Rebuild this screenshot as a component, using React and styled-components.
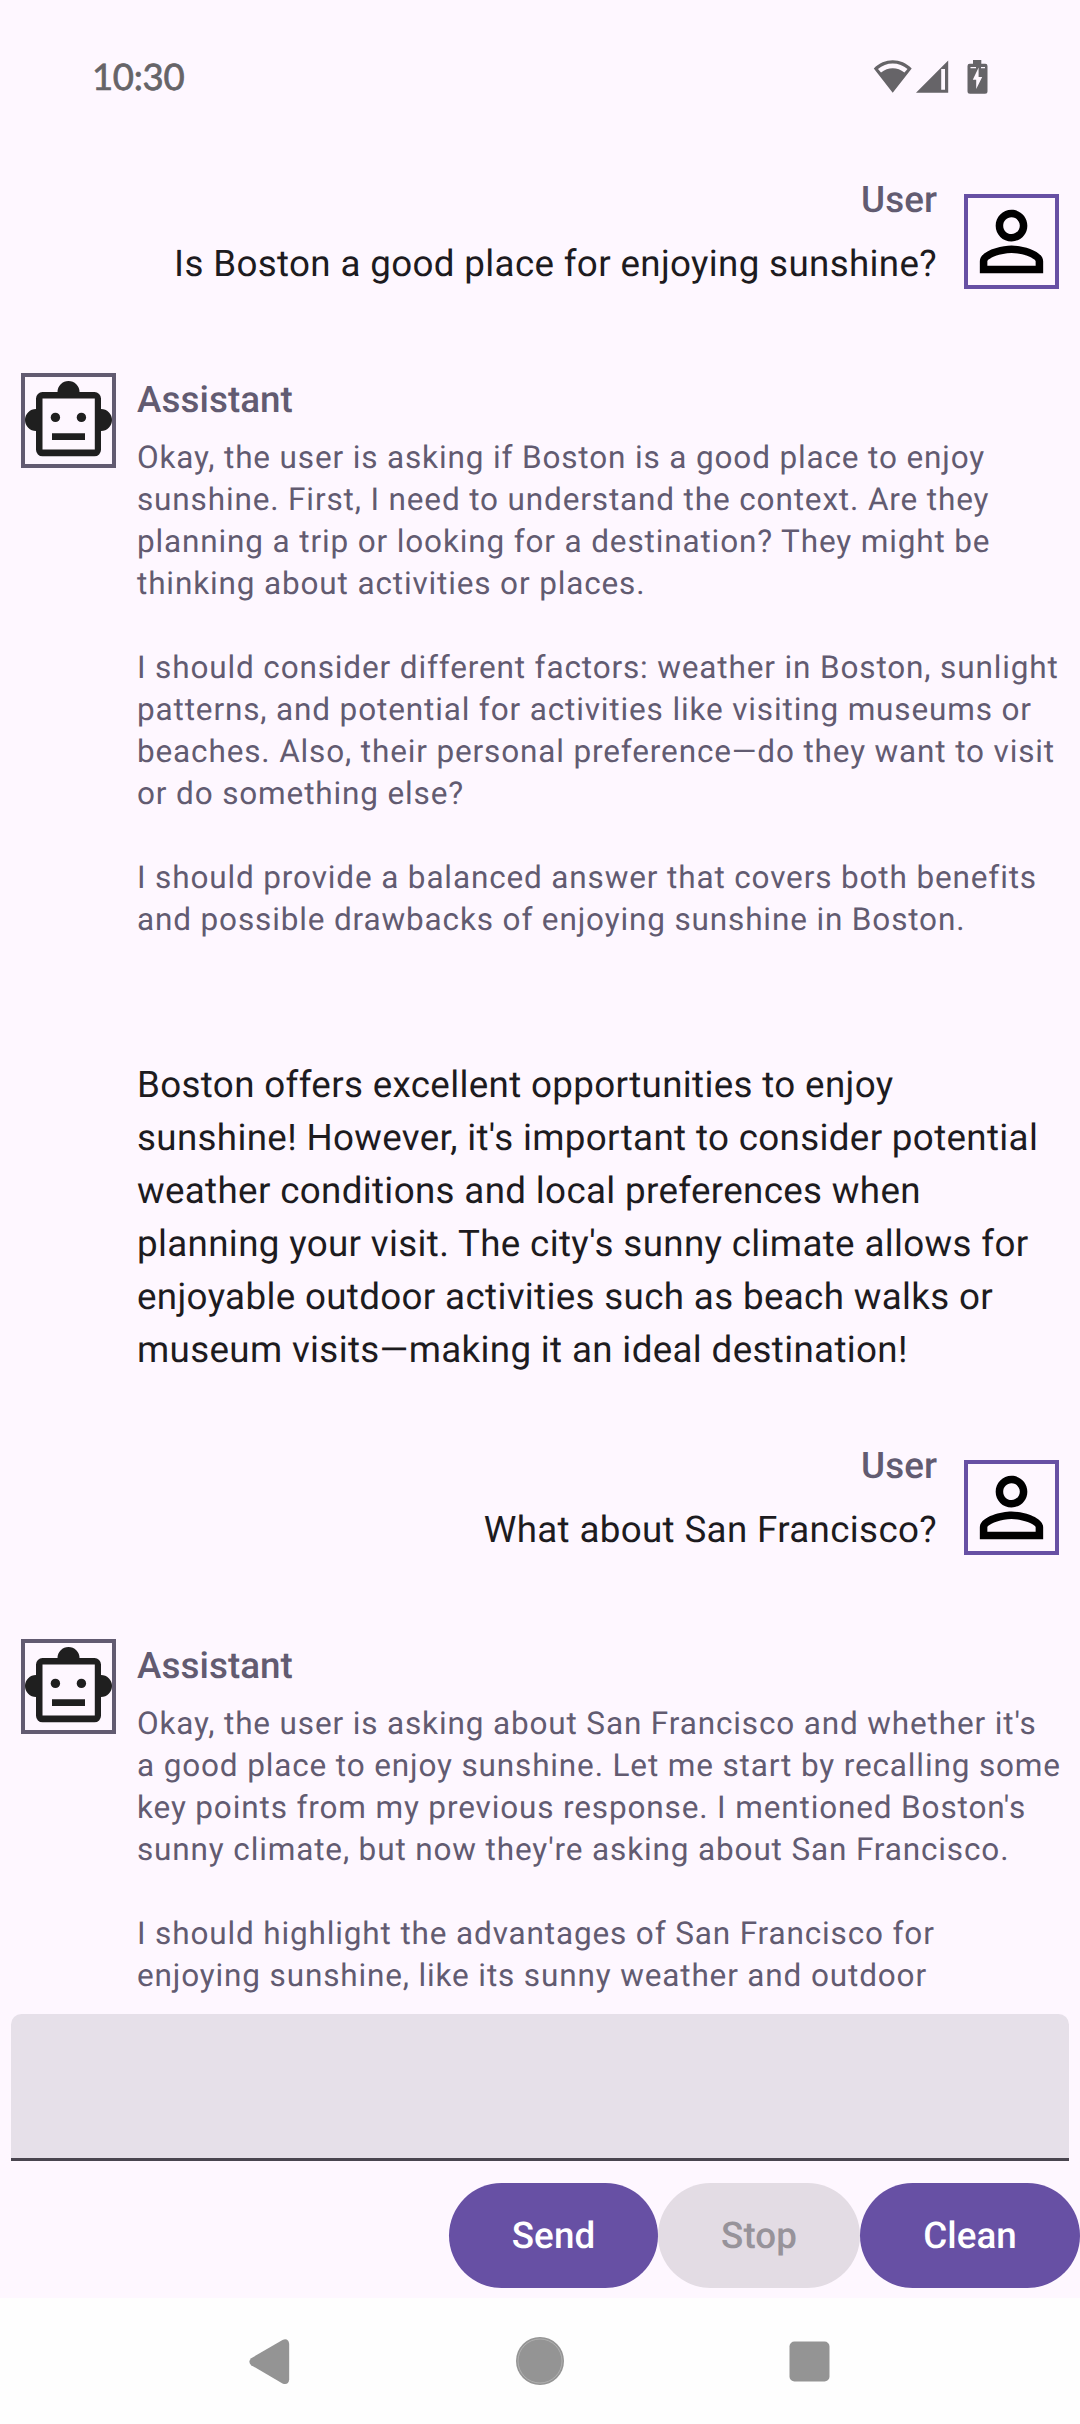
import React from "react";
import styled, { createGlobalStyle } from "styled-components";

const Global = createGlobalStyle`
  * { box-sizing: border-box; }
  html, body { margin: 0; padding: 0; background: #fef7ff; }
  body {
    font-family: Roboto, "Noto Sans", sans-serif;
    text-rendering: geometricPrecision;
  }
`;

const Screen = styled.div`
  display: flex;
  flex-direction: column;
  width: 1080px;
  height: 2424px;
  background: #fef7ff;
  overflow: hidden;
`;

const StatusBar = styled.header`
  display: flex;
  flex: none;
  justify-content: space-between;
  height: 152px;
  padding: 55px 91px 0 92px;
  color: #666468;
`;

const Clock = styled.time`
  font: 400 36.5px/42px Lato, sans-serif;
  letter-spacing: -0.3px;
  -webkit-text-stroke: 0.7px #666468;
`;

const StatusIcons = styled.svg`
  display: block;
  width: 116px;
  height: 44px;
`;

const Messages = styled.main`
  display: flex;
  flex-direction: column;
  flex: none;
  height: 1862px;
  padding: 21px 21px 0;
  overflow: hidden;
`;

const Message = styled.article`
  display: flex;
  flex: none;
  flex-direction: ${(p) => (p.$own ? "row-reverse" : "row")};
  align-items: ${(p) => (p.$own ? "flex-end" : "flex-start")};
  gap: ${(p) => (p.$own ? "27px" : "21px")};
  margin-bottom: ${(p) => (p.$own ? "83px" : "63px")};
`;

const Avatar = styled.div`
  flex: none;
  width: 95px;
  height: 95px;
  margin-bottom: 1px;
  border: 4px solid ${(p) => (p.$own ? "#6750a4" : "#625b71")};
  svg { display: block; margin: -4px; }
`;

const Content = styled.div`
  display: flex;
  flex-direction: column;
  gap: 11px;
  align-items: ${(p) => (p.$own ? "flex-end" : "flex-start")};
`;

const Name = styled.div`
  font-size: 36.75px;
  line-height: 53px;
  font-weight: 500;
  letter-spacing: 0.08px;
  color: #625b71;
`;

const Thought = styled.p`
  margin: 0;
  font-size: 31.5px;
  line-height: 42px;
  letter-spacing: 0.86px;
  color: #625b71;
  white-space: pre;
`;

const Answer = styled.p`
  margin: ${(p) => (p.$spaced ? "106px 0 0" : "0")};
  font-size: 36.75px;
  line-height: 53px;
  letter-spacing: 0.34px;
  color: #1d1b20;
  white-space: pre;
`;

const Composer = styled.div`
  flex: none;
  height: 147px;
  margin: 0 11px;
  border-radius: 10.5px 10.5px 0 0;
  border-bottom: 3px solid #49454f;
  background: #e6e0e9;
`;

const Actions = styled.div`
  display: flex;
  flex: none;
  justify-content: flex-end;
  height: 137px;
  padding-top: 22px;
`;

const Button = styled.button`
  height: 105px;
  width: ${(p) => p.$width}px;
  padding: 0;
  border: 0;
  border-radius: 53px;
  font: 500 36.75px/53px Roboto, sans-serif;
  letter-spacing: 0.08px;
  text-rendering: geometricPrecision;
  color: #ffffff;
  background: #6750a4;
  &:disabled {
    color: #97939a;
    background: #e3dce4;
  }
`;

const NavBar = styled.nav`
  display: flex;
  flex: 1;
  justify-content: center;
  gap: 222px;
  padding-top: 39px;
  background: #fefefe;
  svg { display: block; width: 48px; height: 48px; }
`;

const PersonIcon = () => (
  <svg width="95" height="95" viewBox="0 0 24 24" fill="#000">
    <path d="M12 5.9c1.16 0 2.1.94 2.1 2.1s-.94 2.1-2.1 2.1S9.9 9.16 9.9 8s.94-2.1 2.1-2.1m0 9c2.97 0 6.1 1.46 6.1 2.1v1.1H5.9V17c0-.64 3.13-2.1 6.1-2.1M12 4C9.79 4 8 5.79 8 8s1.79 4 4 4 4-1.79 4-4-1.79-4-4-4zm0 9c-2.67 0-8 1.34-8 4v3h16v-3c0-2.66-5.33-4-8-4z" />
  </svg>
);

const RobotIcon = () => (
  <svg width="95" height="95" viewBox="0 0 95 95" fill="#1f1f1f">
    <path
      fillRule="evenodd"
      d="M21.5 19H36.5a11 11 0 0 1 22 0H73.5a6.5 6.5 0 0 1 6.5 6.5V36a11 11 0 0 1 0 22V76.8a6.5 6.5 0 0 1-6.5 6.5h-52a6.5 6.5 0 0 1-6.5-6.5V58a11 11 0 0 1 0-22V25.5a6.5 6.5 0 0 1 6.5-6.5zM21.5 25.4V76.5H73.8V25.4z"
    />
    <circle cx="34.4" cy="44.4" r="4.7" />
    <circle cx="60.4" cy="44.4" r="4.7" />
    <path d="M31 60.2h33v6.8H31z" />
  </svg>
);

const thoughtOne = `Okay, the user is asking if Boston is a good place to enjoy
sunshine. First, I need to understand the context. Are they
planning a trip or looking for a destination? They might be
thinking about activities or places.

I should consider different factors: weather in Boston, sunlight
patterns, and potential for activities like visiting museums or
beaches. Also, their personal preference—do they want to visit
or do something else?

I should provide a balanced answer that covers both benefits
and possible drawbacks of enjoying sunshine in Boston.`;

const answerOne = `Boston offers excellent opportunities to enjoy
sunshine! However, it's important to consider potential
weather conditions and local preferences when
planning your visit. The city's sunny climate allows for
enjoyable outdoor activities such as beach walks or
museum visits—making it an ideal destination!`;

const thoughtTwo = `Okay, the user is asking about San Francisco and whether it's
a good place to enjoy sunshine. Let me start by recalling some
key points from my previous response. I mentioned Boston's
sunny climate, but now they're asking about San Francisco.

I should highlight the advantages of San Francisco for
enjoying sunshine, like its sunny weather and outdoor`;

const messages = [
  { own: true, text: "Is Boston a good place for enjoying sunshine?" },
  { own: false, thought: thoughtOne, text: answerOne },
  { own: true, text: "What about San Francisco?" },
  { own: false, thought: thoughtTwo },
];

export default function App() {
  return (
    <Screen>
      <Global />
      <StatusBar>
        <Clock>10:30</Clock>
        <StatusIcons viewBox="0 0 116 44" fill="#666468">
          <path
            fillRule="evenodd"
            d="M0.8 13.5C11 2.5 28.5 2.5 38.7 13.5L19.7 37.7zM5 14L8 17.6C15 11.7 24.5 11.7 31.4 17.6L34.5 14C26.5 6.5 13 6.5 5 14z"
          />
          <path fillRule="evenodd" d="M43 37.8L75.2 5.5V37.8zM68.2 14V34.8H72V14z" />
          <path
            fillRule="evenodd"
            d="M100 5h8.3v3.7h4a2.2 2.2 0 0 1 2.2 2.2V36.2a2.5 2.5 0 0 1-2.5 2.5H97a2.5 2.5 0 0 1-2.5-2.5V10.9a2.2 2.2 0 0 1 2.2-2.2H100zM105.6 12.5L99.8 24.8H103.2V34L109.2 22H105.6zM97.5 12v1.3h5.5V12zM108 12v1.3h4V12z"
          />
        </StatusIcons>
      </StatusBar>
      <Messages>
        {messages.map((m, i) => (
          <Message key={i} $own={m.own}>
            <Avatar $own={m.own}>{m.own ? <PersonIcon /> : <RobotIcon />}</Avatar>
            <Content $own={m.own}>
              <Name>{m.own ? "User" : "Assistant"}</Name>
              {m.thought && <Thought>{m.thought}</Thought>}
              {m.text && <Answer $spaced={!m.own}>{m.text}</Answer>}
            </Content>
          </Message>
        ))}
      </Messages>
      <Composer />
      <Actions>
        <Button $width={209}>Send</Button>
        <Button $width={202} disabled>Stop</Button>
        <Button $width={220}>Clean</Button>
      </Actions>
      <NavBar>
        <svg viewBox="0 0 48 48" fill="#949494">
          <path d="M5.2 21.2L36.5 2.9Q42.4 .8 43.2 7V42.5Q42.4 48.5 36.5 46.5L5.2 28.2Q1.5 24.7 5.2 21.2z" />
        </svg>
        <svg viewBox="0 0 48 48" fill="#949494">
          <circle cx="24" cy="24" r="24" />
          <circle cx="24" cy="24" r="22" fill="none" stroke="#bcbcbc" strokeWidth="0.7" />
        </svg>
        <svg viewBox="0 0 48 48" fill="#949494">
          <rect x="3.5" y="4.5" width="40" height="40" rx="5" />
        </svg>
      </NavBar>
    </Screen>
  );
}
